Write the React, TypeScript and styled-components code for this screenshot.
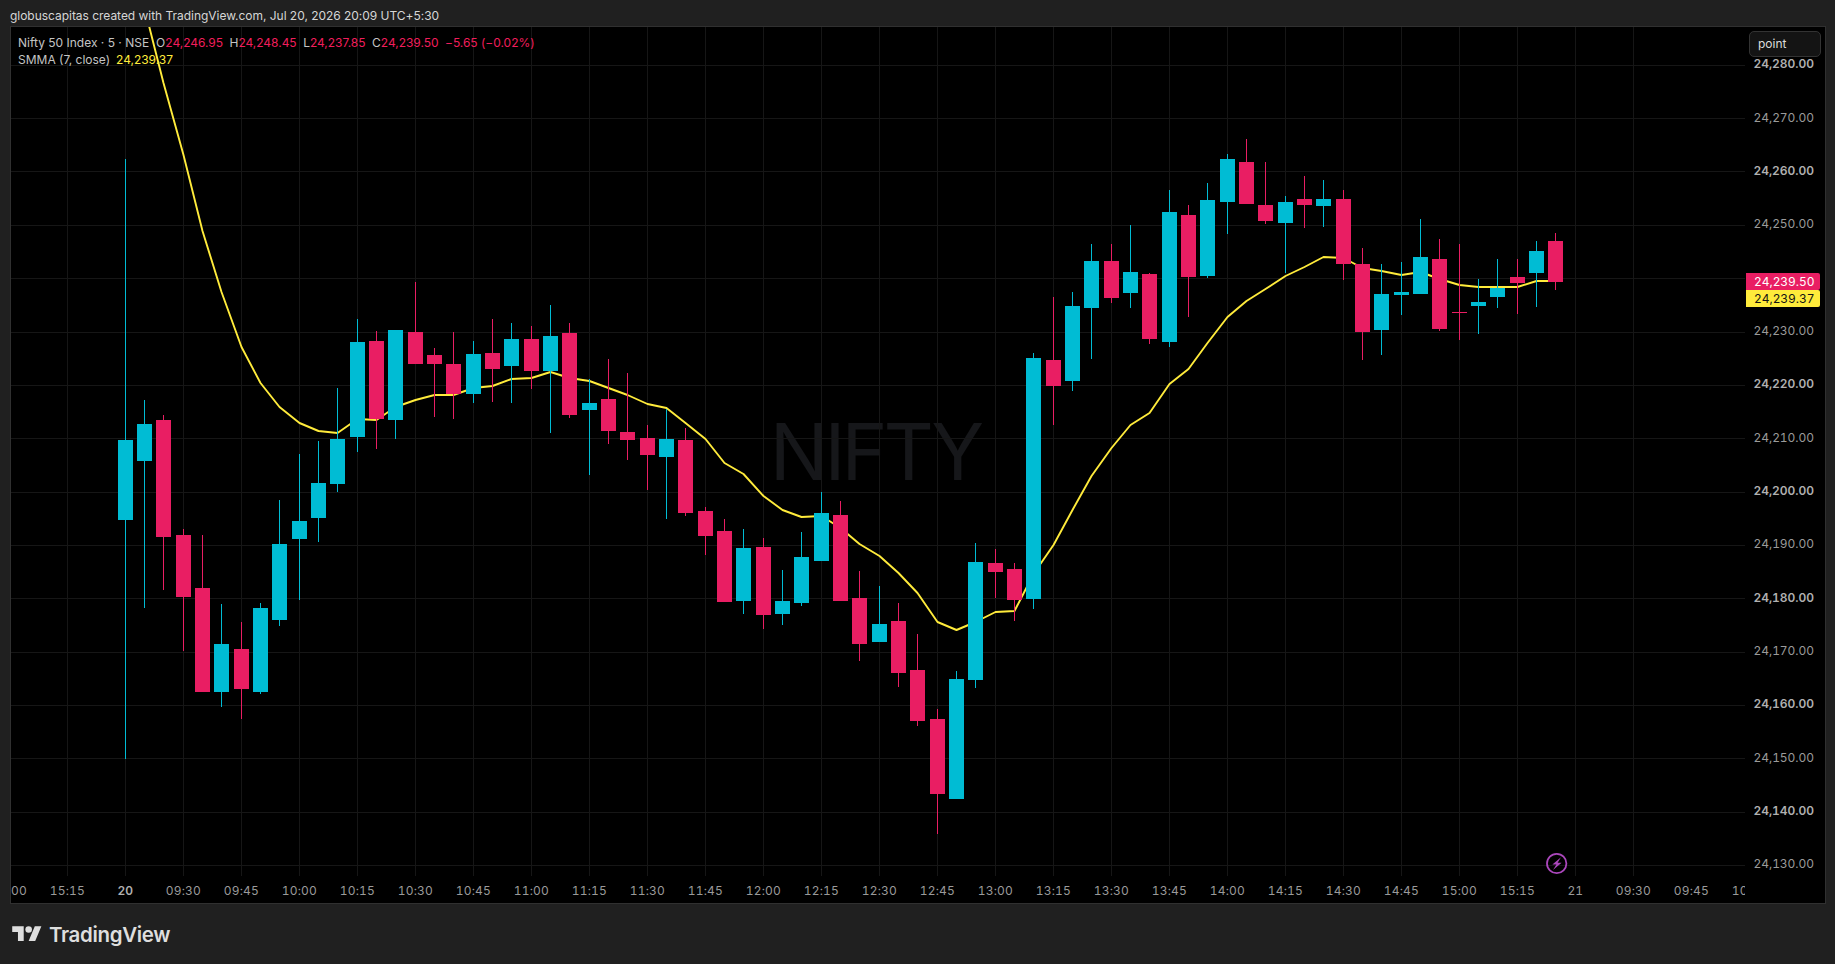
import * as React from 'react';
import styled, { createGlobalStyle } from 'styled-components';

const CYAN = '#00bcd4';
const RED = '#e91e63';
const YELLOW = '#ffeb3b';

const BAR_START = 125;
const BAR_STEP = 58 / 3;
const BODY_LEFT = 7;
const BODY_WIDTH = 15;

// up, wick top, body top, body bottom, wick bottom (page pixels)
const BARS: [boolean, number, number, number, number][] = [
  [true, 159, 440, 520, 759],
  [true, 400, 424, 461, 608],
  [false, 415, 420, 537, 590],
  [false, 529, 535, 597, 651],
  [false, 535, 588, 692, 692],
  [true, 604, 644, 692, 707],
  [false, 622, 649, 689, 719],
  [true, 603, 608, 692, 694],
  [true, 500, 544, 620, 626],
  [true, 454, 521, 539, 600],
  [true, 441, 483, 518, 542],
  [true, 388, 439, 484, 492],
  [true, 319, 342, 437, 452],
  [false, 331, 341, 419, 449],
  [true, 330, 330, 420, 439],
  [false, 282, 332, 364, 364],
  [false, 348, 355, 364, 417],
  [false, 332, 364, 394, 419],
  [true, 341, 354, 394, 403],
  [false, 319, 353, 369, 402],
  [true, 323, 339, 366, 403],
  [false, 326, 339, 371, 389],
  [true, 305, 336, 371, 433],
  [false, 323, 333, 415, 418],
  [true, 379, 403, 410, 475],
  [false, 359, 399, 431, 444],
  [false, 373, 432, 440, 460],
  [false, 425, 438, 455, 490],
  [true, 409, 439, 457, 519],
  [false, 428, 440, 513, 516],
  [false, 507, 511, 536, 555],
  [false, 519, 531, 602, 602],
  [true, 529, 548, 601, 614],
  [false, 538, 547, 615, 629],
  [true, 570, 601, 614, 625],
  [true, 532, 557, 603, 606],
  [true, 492, 513, 561, 561],
  [false, 501, 515, 601, 601],
  [false, 571, 598, 644, 661],
  [true, 586, 624, 642, 642],
  [false, 603, 621, 673, 687],
  [false, 634, 670, 721, 726],
  [false, 709, 719, 794, 834],
  [true, 671, 679, 799, 799],
  [true, 543, 562, 680, 688],
  [false, 549, 563, 572, 598],
  [false, 563, 569, 600, 621],
  [true, 353, 358, 599, 609],
  [false, 297, 360, 386, 425],
  [true, 292, 306, 381, 391],
  [true, 244, 261, 308, 359],
  [false, 244, 261, 298, 303],
  [true, 225, 272, 293, 308],
  [false, 273, 274, 339, 344],
  [true, 190, 212, 342, 347],
  [false, 205, 215, 277, 317],
  [true, 183, 200, 276, 278],
  [true, 154, 159, 202, 234],
  [false, 139, 162, 204, 204],
  [false, 162, 205, 221, 224],
  [true, 196, 202, 223, 273],
  [false, 176, 199, 205, 228],
  [true, 180, 199, 206, 227],
  [false, 190, 199, 264, 280],
  [false, 248, 264, 332, 360],
  [true, 264, 294, 330, 355],
  [true, 262, 292, 295, 315],
  [true, 219, 257, 294, 294],
  [false, 239, 259, 329, 331],
  [false, 244, 312, 313, 340],
  [true, 279, 302, 306, 334],
  [true, 259, 288, 297, 308],
  [false, 259, 277, 283, 314],
  [true, 241, 251, 273, 307],
  [false, 233, 241, 282, 290],
];

const SMMA_Y = [
  -60, 8, 83, 155, 231, 292, 347, 383, 407, 423, 431, 433, 419, 420, 407, 400, 395, 395, 388, 386,
  379, 378, 372, 378, 381, 388, 395, 404, 408, 423, 439, 463, 474, 496, 510, 517, 516, 528, 544,
  556, 573, 593, 622, 630, 622, 612, 611, 574, 545, 510, 476, 448, 425, 413, 384, 369, 343, 317,
  301, 289, 276, 267, 257, 258, 268, 271, 275, 272, 279, 285, 287, 287, 287, 281, 281,
];

const H_GRID = [65, 118, 171, 225, 278, 332, 385, 438, 492, 545, 598, 652, 705, 758, 812, 865];
const V_GRID = Array.from({ length: 29 }, (_, i) => 9 + i * 58);

const PRICES = [
  ['24,280.00', true], ['24,270.00', false], ['24,260.00', true], ['24,250.00', false],
  ['24,240.00', true], ['24,230.00', false], ['24,220.00', true], ['24,210.00', false],
  ['24,200.00', true], ['24,190.00', false], ['24,180.00', true], ['24,170.00', false],
  ['24,160.00', true], ['24,150.00', false], ['24,140.00', true], ['24,130.00', false],
] as const;

const TIMES = [
  '15:00', '15:15', '20', '09:30', '09:45', '10:00', '10:15', '10:30', '10:45', '11:00', '11:15',
  '11:30', '11:45', '12:00', '12:15', '12:30', '12:45', '13:00', '13:15', '13:30', '13:45', '14:00',
  '14:15', '14:30', '14:45', '15:00', '15:15', '21', '09:30', '09:45', '10:00',
];

const barX = (i: number) => BAR_START + Math.floor(i * BAR_STEP + 0.01);

const GlobalStyle = createGlobalStyle`
  html, body {
    margin: 0;
    background: #202020;
    overflow: hidden;
  }
  * {
    box-sizing: border-box;
  }
`;

const Page = styled.div`
  width: 1835px;
  height: 964px;
  display: flex;
  flex-direction: column;
  font-family: Inter, "Liberation Sans", sans-serif;
  background: #202020;
`;

const TopBar = styled.div`
  height: 26px;
  padding: 6px 0 0 10px;
  font-size: 12px;
  line-height: 20px;
  letter-spacing: -0.03px;
  color: #d6d6d6;
  white-space: nowrap;
`;

const ChartFrame = styled.div`
  margin-left: 10px;
  width: 1816px;
  height: 878px;
  border: 1px solid #303030;
  background: #000;
  display: grid;
  grid-template-columns: 1734px 1fr;
  grid-template-rows: 849px 1fr;
`;

const Plot = styled.div`
  position: relative;
  overflow: hidden;
  grid-column: 1;
  grid-row: 1;
`;

const PlotSvg = styled.svg`
  position: relative;
  z-index: 1;
  display: block;
`;

const Watermark = styled.div`
  position: absolute;
  inset: 0;
  display: flex;
  align-items: center;
  justify-content: center;
  padding-right: 6px;
  font-size: 78px;
  font-weight: 400;
  letter-spacing: -4px;
  line-height: 1;
  color: #16171a;
`;

const Legend = styled.div`
  position: absolute;
  z-index: 2;
  top: 7px;
  left: 7px;
  display: flex;
  flex-direction: column;
  font-size: 12px;
  line-height: 17px;
  color: #c4c4c4;
  white-space: nowrap;
`;

const LegendRow = styled.div`
  display: flex;
`;

const LegendTitle = styled.span`
  margin-right: 7px;
`;

const LegendValue = styled.span<{ $tone: 'red' | 'yellow' }>`
  color: ${(p) => (p.$tone === 'red' ? '#f01e5c' : YELLOW)};
  margin-right: 6.5px;
  margin-left: ${(p) => (p.$tone === 'yellow' ? '-1px' : '0')};
  letter-spacing: -0.03px;
`;

const PriceAxis = styled.div`
  position: relative;
  grid-column: 2;
  grid-row: 1 / span 2;
  padding: 10.2px 0 0 8.5px;
  overflow: hidden;
`;

const PriceLabel = styled.div<{ $bold: boolean }>`
  height: 53.33px;
  display: flex;
  align-items: center;
  font-size: 12px;
  letter-spacing: -0.05px;
  font-weight: ${(p) => (p.$bold ? 600 : 400)};
  color: ${(p) => (p.$bold ? '#b0b0b0' : '#9a9a9a')};
  font-variant-numeric: tabular-nums;
`;

const PointTag = styled.div`
  position: absolute;
  top: 4px;
  left: 4px;
  width: 72px;
  height: 26px;
  padding: 0 0 1px 8px;
  display: flex;
  align-items: center;
  font-size: 12px;
  color: #dcdcdc;
  background: #141414;
  border: 1px solid #333;
  border-radius: 5px;
`;

const PricePill = styled.div<{ $tone: 'red' | 'yellow'; $top: number }>`
  position: absolute;
  left: 1px;
  top: ${(p) => p.$top}px;
  width: 74px;
  height: 17px;
  padding-left: 8px;
  display: flex;
  align-items: center;
  font-size: 12px;
  letter-spacing: -0.05px;
  font-variant-numeric: tabular-nums;
  color: ${(p) => (p.$tone === 'red' ? '#fff' : '#141414')};
  background: ${(p) => (p.$tone === 'red' ? RED : YELLOW)};
  border-radius: 0 2px 2px 0;
`;

const TimeAxis = styled.div`
  grid-column: 1;
  grid-row: 2;
  overflow: hidden;
  display: flex;
  padding-top: 7px;
`;

const TimeTrack = styled.div`
  display: flex;
  margin-left: -30.67px;
`;

const TimeLabel = styled.div<{ $bold: boolean }>`
  flex: none;
  width: 58px;
  text-align: center;
  font-size: 12px;
  line-height: 16px;
  letter-spacing: 0.15px;
  font-variant-numeric: tabular-nums;
  font-weight: ${(p) => (p.$bold ? 600 : 400)};
  color: ${(p) => (p.$bold ? '#b0b0b0' : '#9a9a9a')};
`;

const Footer = styled.div`
  flex: 1;
  display: flex;
  align-items: center;
  gap: 7px;
  padding: 0 0 0 12px;
  color: #dedede;
`;

const LogoText = styled.span`
  font-size: 20.5px;
  font-weight: 600;
  letter-spacing: -0.35px;
`;

function Candle({ index }: { index: number }) {
  const [up, wickTop, bodyTop, bodyBottom, wickBottom] = BARS[index];
  const x = barX(index);
  return (
    <g fill={up ? CYAN : RED}>
      <rect x={x} y={wickTop} width={1} height={wickBottom - wickTop} />
      <rect x={x - BODY_LEFT} y={bodyTop} width={BODY_WIDTH} height={bodyBottom - bodyTop} />
    </g>
  );
}

function Chart() {
  const smma = SMMA_Y.map((y, i) => `${barX(i) + 0.5},${y}`).join(' ');
  return (
    <PlotSvg width={1734} height={849} viewBox="11 27 1734 849">
      <g fill="#161616" shapeRendering="crispEdges">
        {V_GRID.map((x) => (
          <rect key={x} x={x} y={27} width={1} height={849} />
        ))}
        {H_GRID.map((y) => (
          <rect key={y} x={11} y={y} width={1734} height={1} />
        ))}
      </g>
      <polyline points={smma} fill="none" stroke={YELLOW} strokeWidth={1.9} strokeLinejoin="round" />
      <g shapeRendering="crispEdges">
        {BARS.map((_, i) => (
          <Candle key={i} index={i} />
        ))}
      </g>
      <circle cx={1556.7} cy={863.5} r={9.7} fill="none" stroke="#ab47bc" strokeWidth={1.8} />
      <path d="M1561 857.2l-8.6 7.3h4l-3.4 5.6 8.6-7.4h-4z" fill="#ab47bc" />
    </PlotSvg>
  );
}

function Logo() {
  return (
    <svg width="30" height="23" viewBox="0 0 36 28" fill="#dedede">
      <path d="M14 22H7V11H0V4h14v18zM28 22h-8l7.5-18h8L28 22z" />
      <circle cx="20" cy="8" r="4" />
    </svg>
  );
}

export default function App() {
  return (
    <>
      <GlobalStyle />
      <Page>
        <TopBar>globuscapitas created with TradingView.com, Jul 20, 2026 20:09 UTC+5:30</TopBar>
        <ChartFrame>
          <Plot>
            <Watermark>NIFTY</Watermark>
            <Chart />
            <Legend>
              <LegendRow>
                <LegendTitle>Nifty 50 Index · 5 · NSE</LegendTitle>
                O<LegendValue $tone="red">24,246.95</LegendValue>
                H<LegendValue $tone="red">24,248.45</LegendValue>
                L<LegendValue $tone="red">24,237.85</LegendValue>
                C<LegendValue $tone="red">24,239.50</LegendValue>
                <LegendValue $tone="red">−5.65 (−0.02%)</LegendValue>
              </LegendRow>
              <LegendRow>
                <LegendTitle>SMMA (7, close)</LegendTitle>
                <LegendValue $tone="yellow">24,239.37</LegendValue>
              </LegendRow>
            </Legend>
          </Plot>
          <TimeAxis>
            <TimeTrack>
              {TIMES.map((t, i) => (
                <TimeLabel key={i} $bold={t === '20'}>
                  {t}
                </TimeLabel>
              ))}
            </TimeTrack>
          </TimeAxis>
          <PriceAxis>
            {PRICES.map(([label, bold]) => (
              <PriceLabel key={label} $bold={bold}>
                {label}
              </PriceLabel>
            ))}
            <PointTag>point</PointTag>
            <PricePill $tone="red" $top={246}>24,239.50</PricePill>
            <PricePill $tone="yellow" $top={263}>24,239.37</PricePill>
          </PriceAxis>
        </ChartFrame>
        <Footer>
          <Logo />
          <LogoText>TradingView</LogoText>
        </Footer>
      </Page>
    </>
  );
}
